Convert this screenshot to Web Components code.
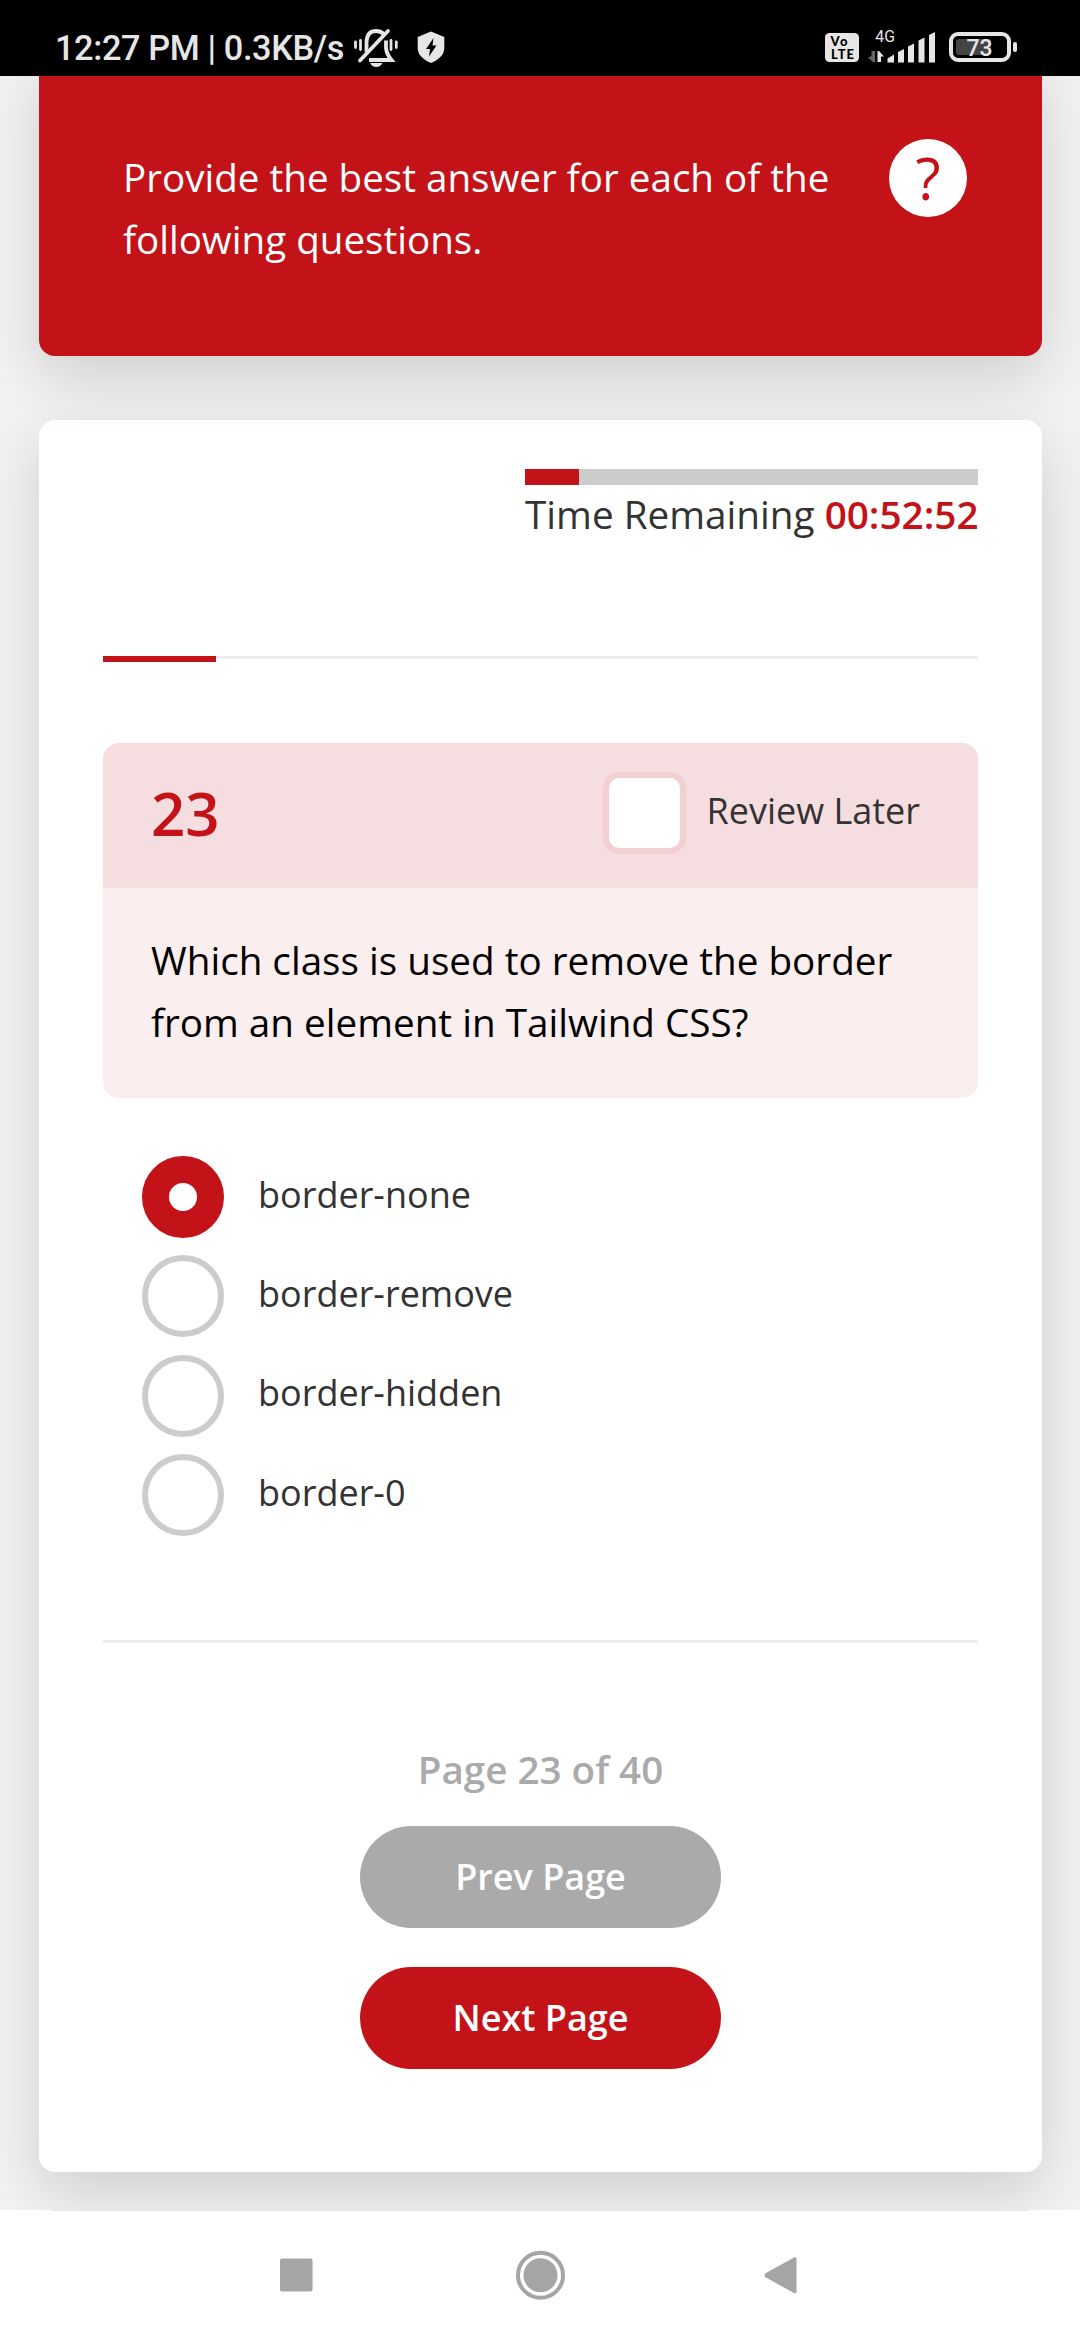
<!DOCTYPE html>
<html lang="en">
<head>
<meta charset="utf-8">
<title>Quiz</title>
<style>
html,body{margin:0;padding:0}
body{width:1080px;height:2340px;overflow:hidden;background:#f2f2f2;font-family:"Open Sans","Noto Sans",sans-serif;color:#333}
</style>
</head>
<body>
<quiz-app></quiz-app>
<script>
const define = (name, html) => {
  const t = document.createElement('template');
  t.innerHTML = html;
  customElements.define(name, class extends HTMLElement {
    constructor() {
      super();
      this.attachShadow({mode: 'open'}).appendChild(t.content.cloneNode(true));
    }
  });
};

define('status-bar', `
<style>
:host{display:flex;box-sizing:border-box;height:76px;background:#000;color:#e6e6e6;font-family:Roboto,sans-serif;align-items:flex-start;justify-content:space-between}
.time{font-size:34.3px;font-weight:500;letter-spacing:-.38px;line-height:40px;white-space:nowrap;padding:28px 0 0 55px;width:290px;flex:none}
.left,.right{display:flex}
svg{display:block}
</style>
<div class="left"><div class="time">12:27 PM | 0.3KB/s</div>
<svg width="110" height="76" viewBox="345 0 110 76">
  <g fill="none" stroke="#e6e6e6" stroke-width="3.8">
    <path d="M366.500 52V42Q367 31 376 31Q380.500 31 384 34"/>
    <path d="M386 40.500V48Q386.500 54 391.500 60H369"/>
    <path d="M360 60.500L388 31" stroke-linecap="round"/>
  </g>
  <g stroke="#e6e6e6" stroke-width="2.8" stroke-linecap="round"><path d="M355.500 42v5.500M360.500 40.500v9M391 40.500v9M396.300 42v5.500"/></g>
  <path d="M370 63h12.500q-2 4-6.200 4t-6.300-4z" fill="#e6e6e6"/>
  <path d="M431 31.500l13.300 5.500v11c0 7-5.500 11.500-13.300 15c-7.800-3.500-13.300-8-13.300-15V37z" fill="#e6e6e6"/>
  <path d="M433.500 38l-7.500 11h4l-1 7.500 7.500-11h-4z" fill="#000"/>
</svg></div>
<div class="right">
<svg width="260" height="76" viewBox="820 0 260 76" font-family="Roboto,sans-serif" fill="#e6e6e6">
  <rect x="825" y="33" width="34" height="29" rx="4.500"/>
  <g fill="#000" font-family="Lato,sans-serif" font-weight="900" font-size="13"><text x="830.5" y="46" textLength="17">Vo</text><text x="831" y="58.500" textLength="23">LTE</text></g>
  <text x="875.300" y="42" font-size="15.800">4G</text>
  <path d="M868 57.500l3.500-1.500v-5h3.500v11h-2z" fill="#666"/><path d="M877.500 51h1.500l5 5.500h-3v5.500h-3.500z"/>
  <path d="M887.500 62.500v-4l6.500-4v8zM898 62.500V52l6-3v13.500zM908 62.500V46.500l6-3v19zM918.500 62.500V40.500l6-3v25zM929 62.500V35l6-3v30.500z"/>
  <rect x="951" y="34" width="58" height="26" rx="7" fill="none" stroke="#e6e6e6" stroke-width="4"/>
  <rect x="956" y="39" width="35" height="16" rx="3" fill="#444"/>
  <rect x="1013" y="42" width="4" height="10" rx="2"/>
  <text x="966.500" y="55.800" font-size="23" font-weight="500">73</text>
</svg></div>`);

define('intro-card', `
<style>
:host{display:flex;box-sizing:border-box;height:300px;margin:-20px 38px 0 39px;padding:83px 75px 0 84px;background:#c31218;color:#fff;border-radius:16px;box-shadow:0 21px 60px rgba(0,0,0,.145);justify-content:space-between;align-items:flex-start;position:relative;z-index:1}
.t{font-size:38.6px;line-height:62px;width:720px;padding-top:7px}
.q{display:flex;width:78px;height:78px;border-radius:50%;background:#fff;color:#c31218;font-size:58px;line-height:78px;align-items:center;justify-content:center}
</style>
<div class="t"><slot></slot></div><div class="q">?</div>`);

define('quiz-timer', `
<style>
:host{display:block;width:453px;margin-left:auto;font-size:38.7px;line-height:58px;height:76px;white-space:nowrap}
.bar{height:16px;background:#ccc}.fill{height:16px;width:54px;background:#c31218}
b{font-weight:600;color:#c31218}
</style>
<div class="bar"><div class="fill"></div></div><div>Time Remaining <b><slot></slot></b></div>`);

define('page-progress', `
<style>
:host{display:block;height:6px}
.track{height:3px;background:#eee}.fill{height:6px;width:113px;background:#c31218}
</style>
<div class="track"><div class="fill"></div></div>`);

define('question-box', `
<style>
:host{display:block;border-radius:16px;overflow:hidden;background:#faeeee}
.head{display:flex;height:145px;align-items:center;background:#f6dee0;padding:0 58px 0 48px;justify-content:space-between}
.num{font-size:60px;font-weight:600;color:#c31218;line-height:80px;padding-bottom:5px}
.rev{display:flex;align-items:center;gap:20px;font-size:36px;padding-bottom:5px}
.box{box-sizing:border-box;width:83px;height:82px;border:6px solid #f2d0d2;border-radius:16px;background:#fff}
.lab{line-height:50px;padding-bottom:5px}
.body{box-sizing:border-box;height:210px;padding:41px 48px 0;font-size:38.65px;line-height:62px;color:#000}
</style>
<div class="head"><div class="num"><slot name="num"></slot></div><div class="rev"><div class="box"></div><div class="lab">Review Later</div></div></div>
<div class="body"><slot></slot></div>`);

define('answer-option', `
<style>
:host{display:flex;height:82px;align-items:center;gap:34px;font-size:36px;line-height:50px}
.r{box-sizing:border-box;width:82px;height:82px;border:6px solid #ccc;border-radius:50%;background:#fff}
:host([checked]) .r{border:27px solid #c31218}
.l{padding-bottom:5px}
</style>
<div class="r"></div><div class="l"><slot></slot></div>`);

define('pill-button', `
<style>
:host{display:flex;width:361px;height:102px;border-radius:51px;background:#aaa;color:#fff;font-size:36px;font-weight:600;align-items:center;justify-content:center}
:host([primary]){background:#c31218}
</style>
<slot></slot>`);

define('quiz-card', `
<style>
:host{display:flex;flex-direction:column;box-sizing:border-box;height:1752px;margin:64px 38px 0 39px;padding:49px 64px 0 64px;background:#fff;border-radius:16px;box-shadow:0 21px 60px rgba(0,0,0,.145)}
page-progress{margin-top:111px}
question-box{margin-top:81px}
.opts{display:flex;flex-direction:column;gap:17.400px;padding:58px 0 0 39px}
.hr{height:3px;background:#eee;margin-top:103.800px}
.foot{display:flex;flex-direction:column;align-items:center;padding-top:95px}
.pg{font-size:38.6px;font-weight:600;line-height:62px;color:#aaa}
.foot pill-button:first-of-type{margin:26px 0 39px}
</style>
<quiz-timer>00:52:52</quiz-timer>
<page-progress></page-progress>
<question-box><span slot="num">23</span>Which class is used to remove the border from an element in Tailwind CSS?</question-box>
<div class="opts">
<answer-option checked>border-none</answer-option>
<answer-option>border-remove</answer-option>
<answer-option>border-hidden</answer-option>
<answer-option>border-0</answer-option>
</div>
<div class="hr"></div>
<div class="foot"><div class="pg">Page 23 of 40</div><pill-button>Prev Page</pill-button><pill-button primary>Next Page</pill-button></div>`);

define('nav-bar', `
<style>
:host{display:block;height:130px;background:#fff;position:relative;z-index:2}
svg{display:block}
</style>
<svg width="1080" height="130" viewBox="0 2210 1080 130" fill="#a5a5a5">
<rect x="52" y="2210" width="976" height="1" fill="#e6e6e6"/>
<rect x="280" y="2258.500" width="32.500" height="33" rx="2"/>
<circle cx="540.500" cy="2275.300" r="22.500" fill="none" stroke="#a5a5a5" stroke-width="4"/><circle cx="540.500" cy="2275.300" r="17"/>
<path d="M765.500 2273.300L794 2257.500Q796.500 2256.500 796.500 2259V2291.500Q796.500 2294 794 2293L765.500 2277.300Q763.500 2275.300 765.500 2273.300z"/>
</svg>`);

define('quiz-app', `
<style>
:host{display:flex;flex-direction:column;height:2340px;overflow:hidden}
status-bar{position:relative;z-index:3;flex:none}
intro-card,quiz-card{flex:none}
nav-bar{margin-top:38px;flex:none}
</style>
<status-bar></status-bar>
<intro-card>Provide the best answer for each of the following questions.</intro-card>
<quiz-card></quiz-card>
<nav-bar></nav-bar>`);
</script>
</body>
</html>
